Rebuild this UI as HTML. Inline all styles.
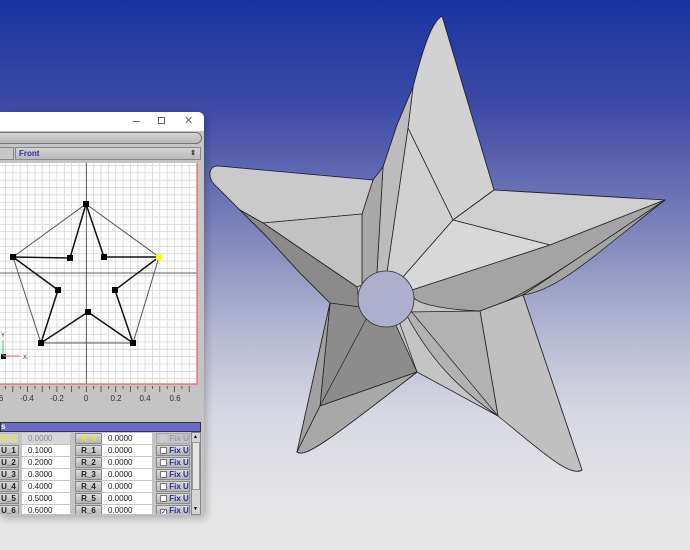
<!DOCTYPE html>
<html><head><meta charset="utf-8"><style>
*{margin:0;padding:0;box-sizing:border-box}
body{width:690px;height:550px;overflow:hidden;position:relative;font-family:"Liberation Sans",sans-serif;
background:linear-gradient(180deg,#1834a0 0%,#3f4ba6 20%,#7e84bb 42%,#b4b7d2 60%,#d6d7e2 75%,#e4e4e6 90%,#e6e6e6 100%)}
.abs{position:absolute}
.win{left:0;top:112px;width:204px;height:403px;background:#c4c4c4;border-radius:0 6px 2px 0;box-shadow:2px 3px 8px rgba(0,0,0,.25);overflow:hidden}
.title{left:0;top:0;width:204px;height:19px;background:#fff}
.btn{background:linear-gradient(#dcdcdc,#b4b4b4);border:1px solid #8a8a8a;font-size:8px;font-weight:bold;color:#222;text-align:center;line-height:10px}
.val{background:#fff;font-size:8px;color:#222;line-height:11px;padding-left:6px}
.fix{font-size:8px;font-weight:bold;color:#2a2aa0;line-height:10px}
</style></head><body>

<svg class="abs" style="left:0;top:0" width="690" height="550">
<g stroke="#222" stroke-width="0.8" stroke-linejoin="round">
<!-- base silhouette -->
<path d="M442,16 C432,22 424,45 413,87 L397,125 L383,167 L373,180 L218,166 C208,166 208,178 214,184 L240,210 L267,237 L300,273 L330,303 L297,452 C305,458 330,440 417,372 L498,416 C560,460 575,476 582,470 L523,295 L665,200 L494,190 Z" fill="#c4c4c4"/>
<!-- top arm right face -->
<path d="M442,16 L494,190 L453,220 L408,128 L413,87 C424,45 432,22 442,16Z" fill="#d2d2d2"/>
<path d="M408,128 L453,220 L403,277 L387,272 Z" fill="#d0d0d0"/>
<!-- top arm left slivers -->
<path d="M413,87 L408,128 L387,272 L377,272 L383,167 L397,125 Z" fill="#bcbcbc"/>
<path d="M383,167 L377,272 L362,285 L362,214 L373,180 Z" fill="#a8a8a8"/>
<!-- right arm -->
<path d="M494,190 L665,200 L550,245 L453,220 Z" fill="#cfcfcf"/>
<path d="M453,220 L550,245 L412,290 L403,277 Z" fill="#d8d8d8"/>
<path d="M550,245 L665,200 C600,250 560,290 523,295 L480,311 C450,310 420,305 414,298 L412,290 Z" fill="#a4a4a4"/>
<path d="M665,200 L523,295 L480,311 C520,300 560,270 665,200Z" fill="#909090"/>
<!-- bottom right arm -->
<path d="M480,311 L523,295 L582,470 C570,478 540,450 498,416 Z" fill="#c0c0c0"/>
<path d="M405,312 L480,311 L498,416 C460,390 430,360 405,312Z" fill="#b2b2b2"/>
<!-- bottom left arm -->
<path d="M330,303 L370,305 L390,312 L417,372 L320,406 Z" fill="#8c8c8c"/>
<path d="M330,303 L320,406 L297,452 Z" fill="#a0a0a0"/>
<path d="M320,406 L417,372 C330,440 305,458 297,452 Z" fill="#a8a8a8"/>
<!-- left arm -->
<path d="M218,166 L373,180 L362,214 L263,223 L240,210 L214,184 C208,178 208,166 218,166Z" fill="#cacaca"/>
<path d="M263,223 L362,214 L362,285 L357,287 Z" fill="#c2c2c2"/>
<path d="M240,210 L263,223 L357,287 L360,307 L330,303 L300,273 L267,237 Z" fill="#8a8a8a"/>
</g>
<g stroke="#222" stroke-width="0.7" fill="none">
<path d="M395,310 L417,372"/>
<path d="M410,310 L498,416"/>
<path d="M370,312 L320,406"/>
</g>
<circle cx="386" cy="299" r="28" fill="#adafcd" stroke="#333" stroke-width="0.8"/>
</svg>

<div class="abs win">
 <div class="abs title"></div>
 <div class="abs" style="left:133px;top:9px;width:7px;height:1px;background:#666"></div>
 <div class="abs" style="left:158px;top:5px;width:7px;height:7px;border:1px solid #666"></div>
 <div class="abs" style="left:184px;top:2px;font-size:11px;color:#666">✕</div>
 <div class="abs" style="left:-10px;top:20px;width:212px;height:12px;border:1px solid #777;border-radius:6px;background:linear-gradient(#d4d4d4,#b8b8b8)"></div>
 <div class="abs" style="left:-2px;top:35px;width:16px;height:13px;border:1px solid #888;background:#c8c8c8"></div>
 <div class="abs" style="left:15px;top:35px;width:186px;height:13px;border:1px solid #888;background:linear-gradient(#d4d4d4,#bababa);font-size:8px;font-weight:bold;color:#2a2aa0;padding-left:3px;line-height:11px">Front<span style="position:absolute;right:4px;color:#333;font-size:7px">⇕</span></div>
 <svg class="abs" style="left:0;top:51px" width="204" height="290">
  <rect x="0" y="0" width="197" height="221" fill="#fff"/>
  <g stroke="#d6d6d6" stroke-width="0.8">
   <path d="M5.5,0V221M12.8,0V221M20.2,0V221M27.5,0V221M34.9,0V221M42.2,0V221M49.6,0V221M56.9,0V221M64.3,0V221M71.6,0V221M79,0V221M93.7,0V221M101,0V221M108.4,0V221M115.7,0V221M123.1,0V221M130.4,0V221M137.8,0V221M145.1,0V221M152.5,0V221M159.8,0V221M167.2,0V221M174.5,0V221M181.9,0V221M189.2,0V221"/>
   <path d="M0,2.5H197M0,9.9H197M0,17.2H197M0,24.6H197M0,31.9H197M0,39.3H197M0,46.6H197M0,54H197M0,61.3H197M0,68.7H197M0,76H197M0,83.4H197M0,90.7H197M0,98.1H197M0,105.4H197M0,112.8H197M0,120.1H197M0,127.5H197M0,134.8H197M0,142.2H197M0,149.5H197M0,156.9H197M0,164.2H197M0,171.6H197M0,178.9H197M0,186.3H197M0,193.6H197M0,201H197M0,208.3H197M0,215.7H197"/>
  </g>
  <path d="M86.3,0V221M0,110H197" stroke="#333" stroke-width="0.8"/>
  <path d="M197,0V221H0" stroke="#f06060" stroke-width="1.2" fill="none"/>
  <g stroke="#333" stroke-width="1" fill="none">
   <path d="M86,41 L159,94 L133,180 L41,180 L13,94 Z" stroke="#555"/>
   <path d="M86,41 L104,94 L159,94 L115,127 L133,180 L88,149 L41,180 L58,127 L13,94 L70,95 Z" stroke-width="1.5" stroke="#111"/>
  </g>
  <g fill="#000">
   <rect x="83" y="38" width="6" height="6"/><rect x="10" y="91" width="6" height="6"/>
   <rect x="67" y="92" width="6" height="6"/><rect x="101" y="91" width="6" height="6"/>
   <rect x="55" y="124" width="6" height="6"/><rect x="112" y="124" width="6" height="6"/>
   <rect x="85" y="146" width="6" height="6"/><rect x="38" y="177" width="6" height="6"/>
   <rect x="130" y="177" width="6" height="6"/><rect x="1" y="191" width="5" height="5"/>
  </g>
  <rect x="156" y="91" width="6" height="6" fill="#ffff00"/>
  <path d="M3,193V177" stroke="#4c4" stroke-width="1"/>
  <path d="M3,193H20" stroke="#f66" stroke-width="1"/>
  <text x="1" y="174" font-size="6" fill="#333" font-family="Liberation Sans">Y</text>
  <text x="23" y="196" font-size="6" fill="#333" font-family="Liberation Sans">X</text>
  <g stroke="#444" stroke-width="0.8">
   <path d="M5.5,223v3M12.8,223v6M20.2,223v3M27.5,223v6M34.9,223v3M42.2,223v6M49.6,223v3M56.9,223v6M64.3,223v3M71.6,223v6M79,223v3M86.3,223v6M93.7,223v3M101,223v6M108.4,223v3M115.7,223v6M123.1,223v3M130.4,223v6M137.8,223v3M145.1,223v6M152.5,223v3M159.8,223v6M167.2,223v3M174.5,223v6M181.9,223v3M189.2,223v6"/>
  </g>
  <g font-size="8" fill="#333" font-family="Liberation Sans" text-anchor="middle">
   <text x="1" y="238">6</text><text x="27" y="238">-0.4</text><text x="57" y="238">-0.2</text><text x="86" y="238">0</text><text x="116" y="238">0.2</text><text x="145" y="238">0.4</text><text x="175" y="238">0.6</text>
  </g>
 </svg>
 <div class="abs" style="left:0;top:310px;width:201px;height:10px;background:#6a6ac8;border:1px solid #333;font-size:8px;color:#fff;font-weight:bold;line-height:8px">s</div>
 <div class="abs" style="left:0;top:320px;width:191px;height:83px;background:#c4c4c4"></div>
 <div class="abs" style="left:191px;top:320px;width:10px;height:83px;background:#d4d4d4;border:1px solid #888"></div>
 <div class="abs" style="left:193px;top:322px;width:6px;height:6px;font-size:5px">▲</div>
 <div class="abs" style="left:192px;top:330px;width:8px;height:48px;background:#e4e4e4;border:1px solid #999"></div>
 <div class="abs" style="left:193px;top:394px;width:6px;height:6px;font-size:5px">▼</div>
 <div class="abs" style="left:0;top:320px">
  <div class="abs btn" style="left:-2px;top:1px;width:21px;height:11px;color:#ee0;background:#d0d0d0;border-color:#bbb">U_0</div>
  <div class="abs val" style="left:22px;top:1px;width:48px;height:11px;background:#d6d6d6;color:#888">0.0000</div>
  <div class="abs btn" style="left:75px;top:1px;width:27px;height:11px;color:#ee0">R_0</div>
  <div class="abs val" style="left:102px;top:1px;width:50px;height:11px">0.0000</div>
  <div class="abs fix" style="left:156px;top:1px;width:34px;height:11px;color:#99a;border:1px solid #aaa;padding-left:3px"><span style="display:inline-block;width:7px;height:7px;background:#ccc;vertical-align:-1px"></span> Fix U</div>
 </div>
 <div class="abs" style="left:0;top:332px">
  <div class="abs btn" style="left:-2px;top:1px;width:21px;height:11px">U_1</div><div class="abs val" style="left:22px;top:1px;width:48px;height:11px">0.1000</div>
  <div class="abs btn" style="left:75px;top:1px;width:27px;height:11px">R_1</div><div class="abs val" style="left:102px;top:1px;width:50px;height:11px">0.0000</div>
  <div class="abs fix btn" style="left:156px;top:1px;width:34px;height:11px;color:#2a2aa0;text-align:left;padding-left:3px"><span style="display:inline-block;width:7px;height:7px;background:#fff;border:1px solid #777;vertical-align:-1px"></span> Fix U</div>
 </div>
 <div class="abs" style="left:0;top:344px">
  <div class="abs btn" style="left:-2px;top:1px;width:21px;height:11px">U_2</div><div class="abs val" style="left:22px;top:1px;width:48px;height:11px">0.2000</div>
  <div class="abs btn" style="left:75px;top:1px;width:27px;height:11px">R_2</div><div class="abs val" style="left:102px;top:1px;width:50px;height:11px">0.0000</div>
  <div class="abs fix btn" style="left:156px;top:1px;width:34px;height:11px;color:#2a2aa0;text-align:left;padding-left:3px"><span style="display:inline-block;width:7px;height:7px;background:#fff;border:1px solid #777;vertical-align:-1px"></span> Fix U</div>
 </div>
 <div class="abs" style="left:0;top:356px">
  <div class="abs btn" style="left:-2px;top:1px;width:21px;height:11px">U_3</div><div class="abs val" style="left:22px;top:1px;width:48px;height:11px">0.3000</div>
  <div class="abs btn" style="left:75px;top:1px;width:27px;height:11px">R_3</div><div class="abs val" style="left:102px;top:1px;width:50px;height:11px">0.0000</div>
  <div class="abs fix btn" style="left:156px;top:1px;width:34px;height:11px;color:#2a2aa0;text-align:left;padding-left:3px"><span style="display:inline-block;width:7px;height:7px;background:#fff;border:1px solid #777;vertical-align:-1px"></span> Fix U</div>
 </div>
 <div class="abs" style="left:0;top:368px">
  <div class="abs btn" style="left:-2px;top:1px;width:21px;height:11px">U_4</div><div class="abs val" style="left:22px;top:1px;width:48px;height:11px">0.4000</div>
  <div class="abs btn" style="left:75px;top:1px;width:27px;height:11px">R_4</div><div class="abs val" style="left:102px;top:1px;width:50px;height:11px">0.0000</div>
  <div class="abs fix btn" style="left:156px;top:1px;width:34px;height:11px;color:#2a2aa0;text-align:left;padding-left:3px"><span style="display:inline-block;width:7px;height:7px;background:#fff;border:1px solid #777;vertical-align:-1px"></span> Fix U</div>
 </div>
 <div class="abs" style="left:0;top:380px">
  <div class="abs btn" style="left:-2px;top:1px;width:21px;height:11px">U_5</div><div class="abs val" style="left:22px;top:1px;width:48px;height:11px">0.5000</div>
  <div class="abs btn" style="left:75px;top:1px;width:27px;height:11px">R_5</div><div class="abs val" style="left:102px;top:1px;width:50px;height:11px">0.0000</div>
  <div class="abs fix btn" style="left:156px;top:1px;width:34px;height:11px;color:#2a2aa0;text-align:left;padding-left:3px"><span style="display:inline-block;width:7px;height:7px;background:#fff;border:1px solid #777;vertical-align:-1px"></span> Fix U</div>
 </div>
 <div class="abs" style="left:0;top:392px;height:10px;width:191px;overflow:hidden">
  <div class="abs btn" style="left:-2px;top:1px;width:21px;height:11px">U_6</div><div class="abs val" style="left:22px;top:1px;width:48px;height:11px">0.6000</div>
  <div class="abs btn" style="left:75px;top:1px;width:27px;height:11px">R_6</div><div class="abs val" style="left:102px;top:1px;width:50px;height:11px">0.0000</div>
  <div class="abs fix btn" style="left:156px;top:1px;width:34px;height:11px;color:#2a2aa0;text-align:left;padding-left:3px"><span style="display:inline-block;width:7px;height:7px;background:#fff;border:1px solid #777;vertical-align:-1px;font-size:6px;line-height:6px">✓</span> Fix U</div>
 </div>
</div>
</body></html>
